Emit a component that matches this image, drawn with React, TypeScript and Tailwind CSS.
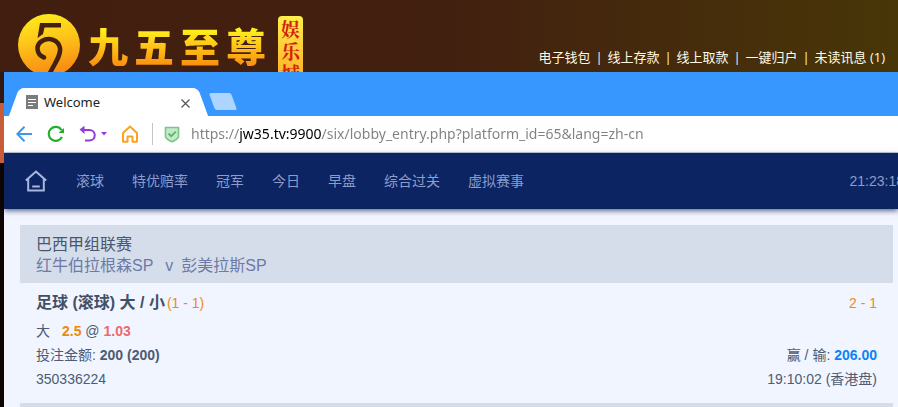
import React from "react";

const accountLinks = ["电子钱包", "线上存款", "线上取款", "一键归户", "未读讯息 (1)"];
const navLinks = ["滚球", "特优赔率", "冠军", "今日", "早盘", "综合过关", "虚拟赛事"];

function LogoMark() {
  return (
    <svg className="h-[62px] w-[62px] shrink-0" viewBox="0 0 62 62" aria-hidden="true">
      <defs>
        <linearGradient id="disc" x1="0" y1="0" x2="0.2" y2="1">
          <stop offset="0" stopColor="#fff01e" />
          <stop offset="0.5" stopColor="#fdc41a" />
          <stop offset="1" stopColor="#f88d12" />
        </linearGradient>
      </defs>
      <circle cx="31" cy="31" r="31" fill="url(#disc)" />
      <path d="M22 9H43V13.5H26.5L25 20L19.5 24Z" fill="#432010" />
      <path
        d="M26 43.5C18 40 17.5 31 24 27C31 22.5 40.5 26 42 34C43.2 42 36 50 31 61"
        fill="none"
        stroke="#432010"
        strokeWidth="4.5"
      />
      <circle cx="26" cy="43.5" r="2.3" fill="#432010" />
    </svg>
  );
}

function SiteHeader() {
  return (
    <header className="flex h-[72px] shrink-0 items-start justify-between overflow-hidden bg-linear-to-r from-[#421e10] via-[#42200f] to-[#483607] pr-[13px] pl-[18px]">
      <div className="flex items-start pt-3.5">
        <LogoMark />
        <div className="ml-2 flex gap-1.5 pt-1 font-['Noto_Sans_CJK_SC',sans-serif] text-[40px] leading-[54px] font-black">
          {["九", "五", "至", "尊"].map((c) => (
            <span
              key={c}
              className="bg-linear-to-b from-[#fff21e] from-20% to-[#f98c10] to-90% bg-clip-text text-transparent"
            >
              {c}
            </span>
          ))}
        </div>
        <div className="mt-0.5 ml-3 flex w-[25px] shrink-0 flex-col items-center rounded-[4px] bg-linear-to-b from-[#fff04a] to-[#fba820] pt-0.5 font-['Noto_Serif_CJK_SC','Noto_Sans_CJK_SC',sans-serif] text-[19px] leading-[22px] font-bold text-[#d2200c]">
          <span>娱</span>
          <span>乐</span>
          <span>城</span>
        </div>
      </div>
      <nav className="flex pt-12 font-['Open_Sans','Noto_Sans_CJK_SC',sans-serif] text-[13px] leading-[18px] text-[#fffbe6]">
        {accountLinks.map((label, i) => (
          <React.Fragment key={label}>
            {i > 0 && <span className="w-[17px] text-center">|</span>}
            <a href="#" className="whitespace-nowrap">{label}</a>
          </React.Fragment>
        ))}
      </nav>
    </header>
  );
}

function TabStrip() {
  return (
    <div className="flex h-11 items-end bg-[#3897fe] pl-[5px]">
      <div className="relative isolate flex h-7 w-[199px] items-center pr-[18px] pl-[17px] before:absolute before:inset-y-0 before:left-[5px] before:-z-10 before:w-1/2 before:-skew-x-20 before:rounded-tl-[5px] before:bg-white after:absolute after:inset-y-0 after:right-[5px] after:-z-10 after:w-3/5 after:skew-x-20 after:rounded-tr-[5px] after:bg-white">
        <svg className="h-3.5 w-3" viewBox="0 0 12 14" aria-hidden="true">
          <rect width="12" height="14" fill="#7b7b7b" />
          <path d="M2 4.5H10M2 7.5H10M2 10.5H7" stroke="#fff" />
        </svg>
        <span className="ml-1.5 grow pt-0.5 font-['Noto_Sans',sans-serif] text-[13px] text-[#222]">Welcome</span>
        <button type="button" aria-label="Close tab" className="pt-0.5">
          <svg className="h-[9px] w-[9px]" viewBox="0 0 9 9">
            <path d="M0.5 0.5L8.5 8.5M8.5 0.5L0.5 8.5" stroke="#555" strokeWidth="1.2" />
          </svg>
        </button>
      </div>
      <button
        type="button"
        aria-label="New tab"
        className="mb-1.5 ml-1 h-[17px] w-[22px] skew-x-20 rounded-[2px] bg-[#aed5ff]"
      />
    </div>
  );
}

function Toolbar() {
  return (
    <div className="flex h-[37px] items-center border-b border-[#c3cce0] bg-white pl-3">
      <button type="button" aria-label="Back">
        <svg className="h-4 w-4" viewBox="0 0 16 16" fill="none" stroke="#3f97ea" strokeWidth="2">
          <path d="M16 8H1.5M8.5 0.8L1.3 8L8.5 15.2" />
        </svg>
      </button>
      <button type="button" aria-label="Reload" className="ml-[15px]">
        <svg className="h-[18px] w-[18px]" viewBox="0 0 18 18" fill="none">
          <path d="M14.6 5A7 7 0 1 0 15 12" stroke="#21ae2b" strokeWidth="2.2" />
          <path d="M17 3V8H11.5Z" fill="#21ae2b" />
        </svg>
      </button>
      <button type="button" aria-label="Undo" className="ml-3.5 flex items-center">
        <svg className="h-[18px] w-[18px]" viewBox="0 0 18 18" fill="none">
          <path d="M4 5H10.2C17.6 5 17.6 15.5 10.2 15.5H6" stroke="#943bdd" strokeWidth="2" />
          <path d="M0.5 4.5L5.5 0.8V9Z" fill="#943bdd" />
        </svg>
        <svg className="ml-1 h-1 w-1.5" viewBox="0 0 6 4">
          <path d="M0 0H6L3 3.5Z" fill="#943bdd" />
        </svg>
      </button>
      <button type="button" aria-label="Home" className="ml-3.5">
        <svg className="h-[18px] w-[18px]" viewBox="0 0 18 18" fill="none" stroke="#fba21f" strokeWidth="2">
          <path d="M2 16.8V8L9 1.6L16 8V16.8H11.5V11.5H6.5V16.8Z" strokeLinejoin="round" />
        </svg>
      </button>
      <span className="ml-[13px] h-[22px] w-px bg-[#c4c4c4]" />
      <svg className="ml-[11px] h-[17px] w-4 shrink-0" viewBox="0 0 16 17" fill="none" aria-hidden="true">
        <path d="M1.5 1.5H14.5V10.5C14.5 13 11 14.2 8 15.8C5 14.2 1.5 13 1.5 10.5Z" fill="#c3ebc9" stroke="#7cc488" strokeWidth="1.6" />
        <path d="M4.5 7.5L7.2 10.2L11.8 5.6" stroke="#5fb36e" strokeWidth="1.8" />
      </svg>
      <input
        type="text"
        aria-label="Address"
        readOnly
        value="https://jw35.tv:9900/six/lobby_entry.php?platform_id=65&lang=zh-cn"
        className="ml-[11px] min-w-0 grow bg-[linear-gradient(90deg,#808080_48px,#000_48px,#000_131px,#808080_131px)] bg-clip-text font-['Noto_Sans',sans-serif] text-[14px] leading-5 text-transparent outline-none"
      />
    </div>
  );
}

function LobbyNav() {
  return (
    <nav className="relative flex h-14 items-center bg-[#0c2461] pl-[21px] font-['Liberation_Sans','Noto_Sans_CJK_SC',sans-serif] text-[14px] leading-5 text-[#8e9cc9] shadow-[0_2px_5px_rgba(40,50,80,0.7)]">
      <a href="#" aria-label="Lobby home" className="mr-[29px]">
        <svg className="h-[22px] w-[22px]" viewBox="0 0 22 22" fill="none" stroke="#aab7dd" strokeWidth="2">
          <path d="M0.8 10.6L11 1.6L21.2 10.6M3.2 9V20.6H18.8V9M7.2 16.4H14.8" />
        </svg>
      </a>
      <div className="flex grow gap-7">
        {navLinks.map((label) => (
          <a key={label} href="#" className="whitespace-nowrap">{label}</a>
        ))}
      </div>
      <time className="-mr-1.5 shrink-0">21:23:18</time>
    </nav>
  );
}

function BetTicket() {
  return (
    <article>
      <header className="bg-[#d5ddeb] px-4 pt-[9px] pb-[7px] text-[16px] leading-[21px]">
        <p className="text-[#4a566c]">巴西甲组联赛</p>
        <p className="flex text-[#6c7aa5]">
          <span>红牛伯拉根森SP</span>
          <span className="mr-2 ml-3">v</span>
          <span>彭美拉斯SP</span>
        </p>
      </header>
      <div className="px-4 pt-2 pb-3 text-[14px] leading-6 text-[#4e5b72]">
        <div className="mb-1 flex justify-between text-[#ee8a22]">
          <h2 className="flex gap-0.5">
            <span className="text-[16px] font-bold text-[#434f66]">足球 (滚球) 大 / 小</span>
            <span>(1 - 1)</span>
          </h2>
          <span>2 - 1</span>
        </div>
        <p>
          <span className="mr-3">大</span>
          <b className="text-[#ed8a05]">2.5</b> @ <b className="text-[#ec6a6c]">1.03</b>
        </p>
        <div className="flex justify-between">
          <p>投注金额: <b>200 (200)</b></p>
          <p>赢 / 输: <b className="text-[#0a84f5]">206.00</b></p>
        </div>
        <div className="flex justify-between">
          <p>350336224</p>
          <p>19:10:02 (香港盘)</p>
        </div>
      </div>
    </article>
  );
}

export default function App() {
  return (
    <div className="flex h-screen flex-col overflow-hidden bg-[#0d0502]">
      <SiteHeader />
      <div className="flex min-h-0 grow">
        <div className="w-1 shrink-0 bg-[#0d0502]">
          <div className="h-[31px] bg-[#32170e]" />
          <div className="h-[60px] bg-[#c95c38]" />
        </div>
        <div className="min-w-0 grow overflow-hidden bg-[#f0f5ff]">
          <TabStrip />
          <Toolbar />
          <LobbyNav />
          <main className="mt-4 mr-[5px] ml-4 font-['Liberation_Sans','Noto_Sans_CJK_SC',sans-serif]">
            <BetTicket />
            <div className="h-14 bg-[#d5ddeb]" />
          </main>
        </div>
      </div>
    </div>
  );
}
